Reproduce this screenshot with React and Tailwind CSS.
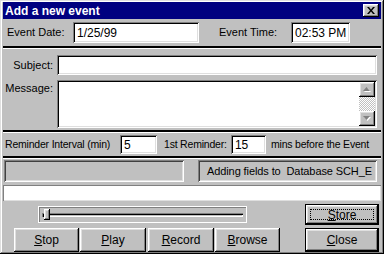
import React from 'react';

const raised =
  'shadow-[inset_-1px_-1px_0_#000,inset_1px_1px_0_#fff,inset_-2px_-2px_0_#808080,inset_2px_2px_0_#dfdfdf]';
const sunken =
  'shadow-[inset_1px_1px_0_#808080,inset_-1px_-1px_0_#fff,inset_2px_2px_0_#000,inset_-2px_-2px_0_#dfdfdf]';
const groove =
  'shadow-[inset_1px_1px_0_#808080,inset_-1px_-1px_0_#fff,inset_2px_2px_0_#404040,inset_-2px_-2px_0_#dfdfdf]';

const Separator = () => (
  <div className="flex flex-col shrink-0">
    <div className="h-[2px] bg-black" />
    <div className="h-px bg-white" />
  </div>
);

const Field = ({ className = '', children }) => (
  <div className={`bg-white ${sunken} flex items-center pl-[4px] text-[12px] text-black ${className}`}>
    {children}
  </div>
);

const Button = ({ label, className = '', isDefault = false, focused = false }) => (
  <div
    className={`relative flex items-center justify-center bg-[#c0c0c0] text-[12px] text-black ${
      isDefault ? 'border border-black' : ''
    } ${raised} ${className}`}
  >
    {focused && <div className="absolute inset-[4px] border border-dotted border-black" />}
    <span>
      <span className="underline">{label[0]}</span>
      {label.slice(1)}
    </span>
  </div>
);

const Arrow = ({ down = false }) => (
  <div className={`w-[16px] h-[15px] bg-[#c0c0c0] ${raised} flex items-center justify-center`}>
    <svg width="8" height="5" viewBox="0 0 8 5">
      {down ? (
        <>
          <polygon points="1,1 8,1 4.5,5" fill="#fff" />
          <polygon points="0,0 7,0 3.5,4" fill="#808080" />
        </>
      ) : (
        <>
          <polygon points="4.5,1 8,5 1,5" fill="#fff" />
          <polygon points="3.5,0 7,4 0,4" fill="#808080" />
        </>
      )}
    </svg>
  </div>
);

export default function App() {
  return (
    <div
      className={`w-[384px] h-[254px] bg-[#c0c0c0] flex flex-col pt-[2px] px-[3px] pb-[2px] font-['Liberation_Sans',Arial,sans-serif] text-[11px] text-black overflow-hidden shadow-[inset_-1px_-1px_0_#000,inset_1px_1px_0_#dfdfdf,inset_-2px_-2px_0_#808080,inset_2px_2px_0_#fff]`}
    >
      {/* Title bar */}
      <div className="h-[17px] shrink-0 bg-[#000080] flex items-center justify-between pl-[2px] pr-[2px]">
        <span className="text-white font-bold text-[12px] leading-none">Add a new event</span>
        <div className={`w-[16px] h-[13px] bg-[#c0c0c0] ${raised} flex items-center justify-center`}>
          <svg width="8" height="7" viewBox="0 0 8 7">
            <path d="M0 0h2l2 2.5L6 0h2L5 3.5 8 7H6L4 4.5 2 7H0l3-3.5z" fill="#000" />
          </svg>
        </div>
      </div>

      {/* Date / time row */}
      <div className="h-[27px] shrink-0 flex items-center">
        <span className="w-[70px] pl-[4px]">Event Date:</span>
        <Field className="w-[126px] h-[21px]">1/25/99</Field>
        <span className="ml-[20px] w-[72px]">Event Time:</span>
        <Field className="w-[59px] h-[21px] text-[11px]">02:53 PM</Field>
      </div>

      <Separator />

      {/* Subject / message */}
      <div className="h-[81px] shrink-0 flex flex-col pt-[6px] pr-[4px] gap-[5px]">
        <div className="flex items-center">
          <span className="w-[50px] text-right">Subject:</span>
          <Field className="ml-[4px] flex-1 h-[20px]" />
        </div>
        <div className="flex">
          <span className="w-[50px] text-right">Message:</span>
          <div className={`ml-[4px] flex-1 h-[48px] bg-white ${sunken} flex justify-end p-[2px]`}>
            <div className="w-[16px] flex flex-col">
              <Arrow />
              <div className="flex-1 bg-[repeating-conic-gradient(#c0c0c0_0_25%,#fff_0_50%)] bg-[length:2px_2px]" />
              <Arrow down />
            </div>
          </div>
        </div>
      </div>

      <Separator />

      {/* Reminder row */}
      <div className="h-[23px] shrink-0 flex items-center text-[10.5px] tracking-[-0.2px]">
        <span className="w-[117px] pl-[2px] whitespace-nowrap">Reminder Interval (min)</span>
        <Field className="w-[37px] h-[19px]">5</Field>
        <span className="ml-[7px] w-[67px] whitespace-nowrap">1st Reminder:</span>
        <Field className="w-[35px] h-[19px]">15</Field>
        <span className="ml-[5px] whitespace-nowrap">mins before the Event</span>
      </div>

      <Separator />

      {/* Status boxes */}
      <div className="h-[25px] shrink-0 flex items-start pt-[1px] pl-[1px] gap-[14px]">
        <div className={`w-[180px] h-[22px] ${groove}`} />
        <div
          className={`w-[179px] h-[22px] ${groove} flex items-center pl-[9px] text-[11px] tracking-[-0.1px] whitespace-pre overflow-hidden`}
        >
          Adding fields to  Database SCH_E
        </div>
      </div>

      {/* Long white field */}
      <div className="mt-[1px] h-[16px] shrink-0 bg-white shadow-[inset_1px_1px_0_#808080,inset_-1px_-1px_0_#dfdfdf]" />

      {/* Slider + Store */}
      <div className="mt-[3px] h-[21px] shrink-0 flex items-center">
        <div className="ml-[35px] w-[209px] h-[17px] shadow-[inset_1px_1px_0_#fff,inset_-1px_-1px_0_#fff,inset_2px_2px_0_#808080] flex items-center pl-[4px] pr-[4px]">
          <div className="relative flex-1 h-[4px] shadow-[inset_1px_1px_0_#808080,inset_2px_2px_0_#000,inset_-1px_-1px_0_#fff]">
            <div className={`absolute left-[2px] top-[-4px] w-[6px] h-[11px] bg-[#c0c0c0] ${raised}`} />
          </div>
        </div>
        <Button label="Store" isDefault focused className="ml-[58px] w-[74px] h-[21px]" />
      </div>

      {/* Buttons */}
      <div className="mt-[2px] h-[25px] shrink-0 flex items-center">
        <Button label="Stop" className="ml-[11px] w-[65px] h-[24px]" />
        <Button label="Play" className="ml-[1px] w-[66px] h-[24px]" />
        <Button label="Record" className="ml-[2px] w-[66px] h-[24px]" />
        <Button label="Browse" className="ml-[1px] w-[65px] h-[24px]" />
        <Button label="Close" isDefault className="ml-[25px] w-[74px] h-[24px]" />
      </div>
    </div>
  );
}
